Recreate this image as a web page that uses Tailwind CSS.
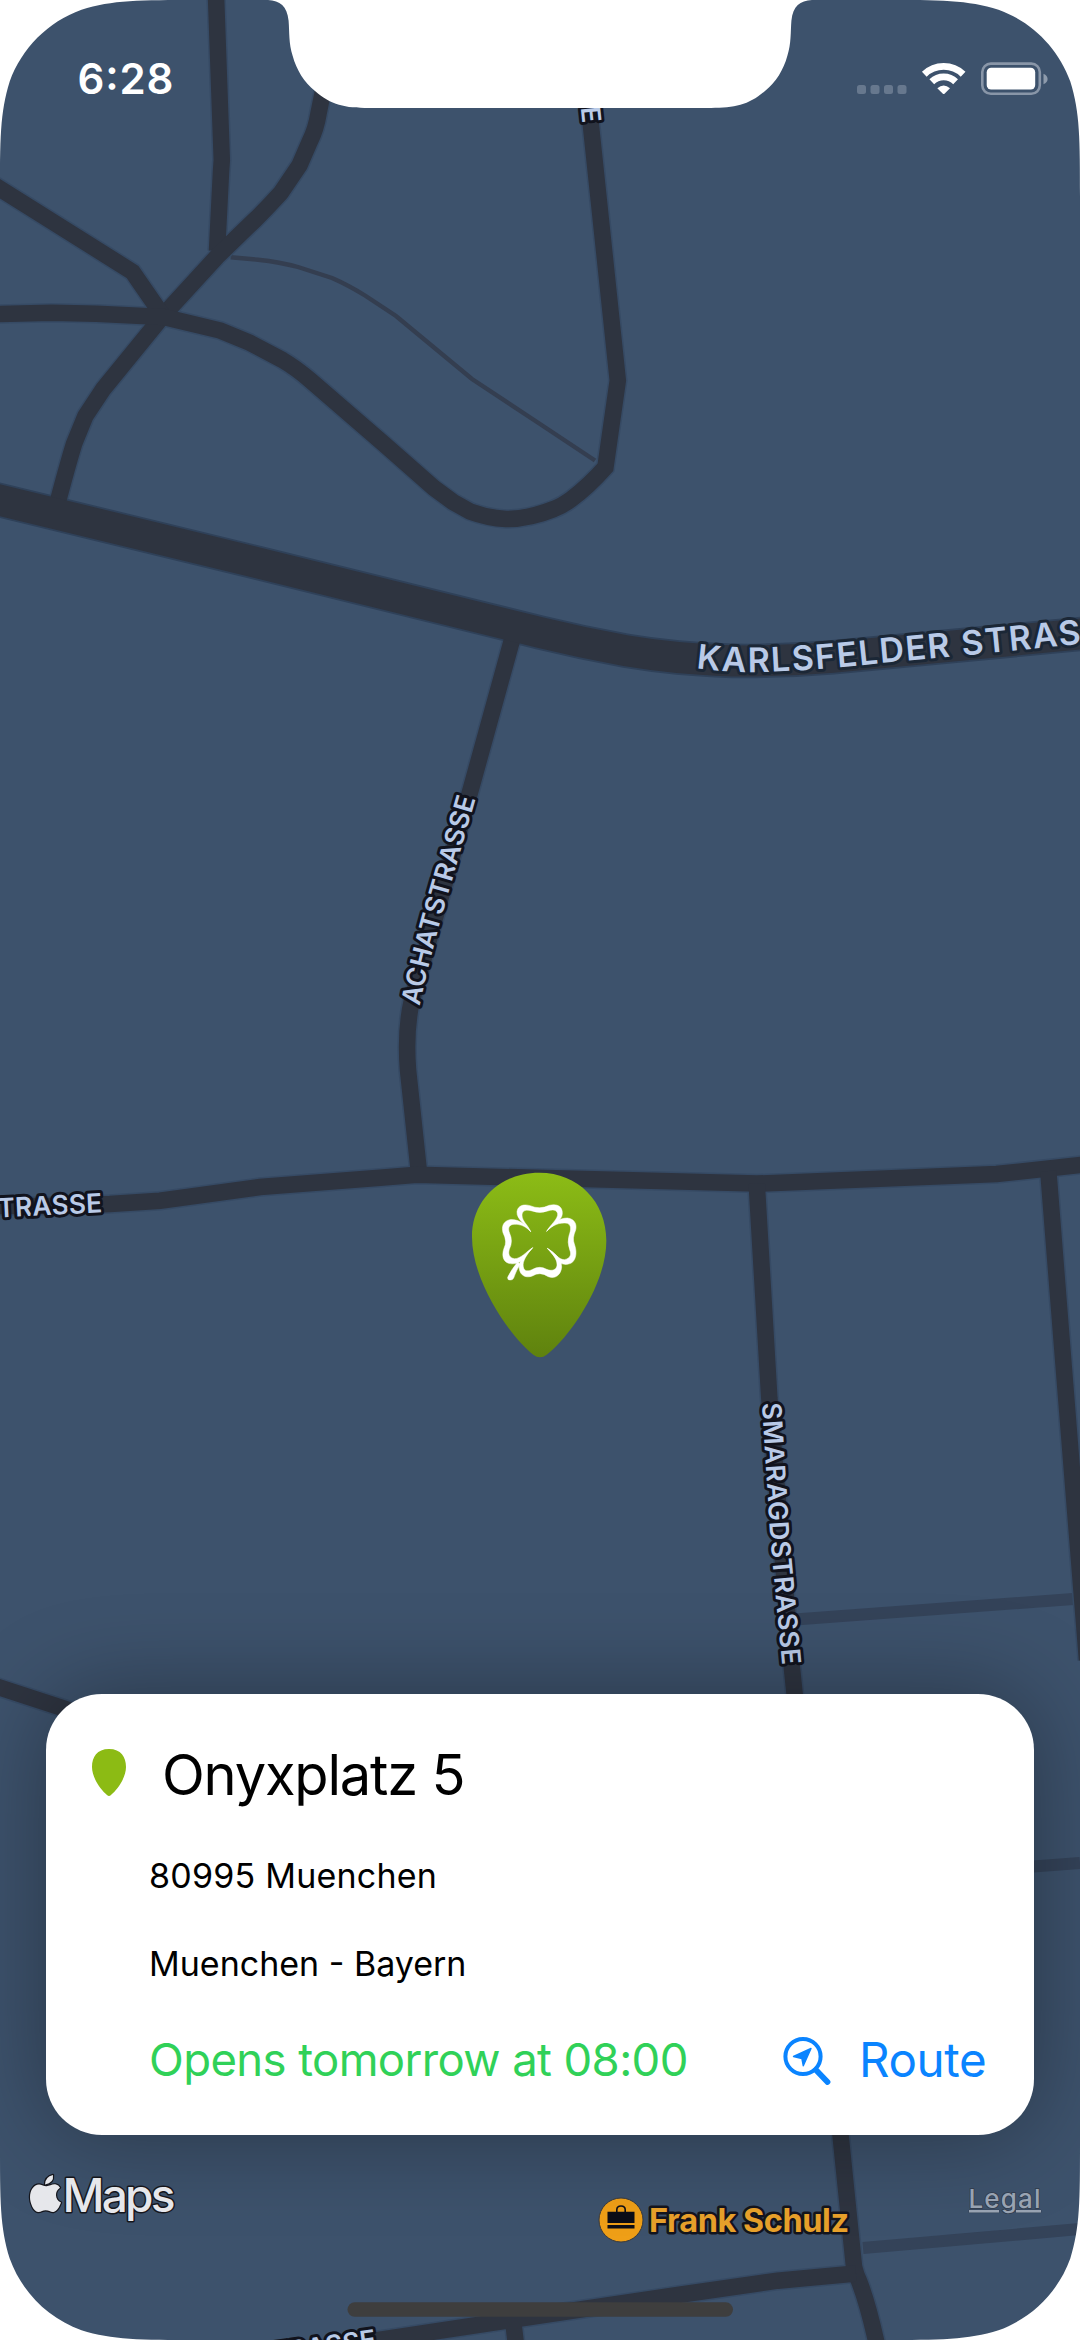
<!DOCTYPE html>
<html lang="en">
<head>
<meta charset="utf-8">
<title>Store location</title>
<script src="https://cdn.jsdelivr.net/npm/@tailwindcss/browser@4"></script>
</head>
<body class="bg-white">
<main class="relative flex h-[2340px] w-[1080px] flex-col overflow-hidden bg-[#3d526c] font-['Inter',sans-serif]">

  <!-- Map canvas -->
  <svg class="absolute inset-0" width="1080" height="2340" viewBox="0 0 1080 2340" fill="none">
    <defs>
      <linearGradient id="pin" x1="0" y1="0" x2="0" y2="1"><stop stop-color="#8cbc16"/><stop offset="1" stop-color="#5f820e"/></linearGradient>
      <g id="roads">
        <path d="M216 -4L221.8 160L221 172L217 251"/>
        <path d="M325 70L322.7 93L318.5 113.6Q316 129 310 141L299.6 165L280.7 193Q268 207 254.8 220L217 256.6L163.6 315L103.3 389L85.4 416L74 444Q67 467 57 505"/>
        <path d="M-5 185.500L132.600 272L163.600 317"/>
        <path d="M-5 314L51.700 312.700L96.400 313.700L163.600 317L220.400 330.600L249.700 342.700L282.400 360Q296 368 310 380L384 444L434 488L453 502L470 511.400Q488 518 506 519Q529 519 553.800 509Q562 506 571 499.400Q589 486 605.400 467.300L617.800 380.500L584 60"/>
        <path d="M512 640L469.400 794.300L412 1000Q405 1030 408 1070L418.700 1170"/>
        <path d="M-5 1206L60 1206L110 1204L160 1200.700L260 1187L380 1177.700L416.700 1174.700L756.700 1183.600L996.700 1174L1085 1164.500"/>
        <path d="M756.700 1183.600L769.300 1398L791.700 1666L840.600 2136L854 2266.700Q856 2275 859 2281Q868 2304 877 2345"/>
        <path d="M856 2273.500L777.600 2280.700L677.800 2295L540 2315.500L378.800 2340L300 2352M513 2320L516 2345"/>
        <path d="M1048.300 1171L1062 1345L1087 1660"/>
        <path d="M-5 1686L65.400 1709L130 1735"/>
      </g>
      <path id="mainroad" d="M-5 499L258.300 563L540 632.500Q583 643 626 650.700Q652 655 677.800 657.500Q735 662.500 769 660.500Q800 660 832.700 657.300L1085 633.500"/>
    </defs>

    <path d="M795 1619.500L1073 1599M1020 1867.500L1080 1863M863 2248L1080 2229" stroke="#344359" stroke-width="12"/>
    <path d="M230.700 257.300L258 259.700Q280 262 298 267L332 278Q348 285 365 295.500L396 316L472 379L540 424L595 460.500" stroke="#343e50" stroke-width="4.400"/>

    <use href="#roads" stroke="#364a64" stroke-width="19.500"/>
    <use href="#mainroad" stroke="#2f4159" stroke-width="34.500"/>
    <use href="#roads" stroke="#2e3440" stroke-width="16.500"/>
    <use href="#mainroad" stroke="#2e3440" stroke-width="31"/>

    <!-- Street labels -->
    <path id="l1" d="M696 668.200Q735 673.500 774 671.700Q830 669 884.400 662.700L972 654.700L1180 634"/>
    <path id="l2" d="M419.500 1006Q428 966 441 919L476 797L481 777"/>
    <path id="l3" d="M762 1403L770 1533.600L782 1664L784 1700"/>
    <g font-family="Inter" font-weight="600" fill="#b9cae7" stroke-linejoin="round" paint-order="stroke">
      <text font-size="34" stroke="#1b2736" stroke-width="6" textLength="433"><textPath href="#l1" textLength="433">KARLSFELDER STRASSE</textPath></text>
      <g font-size="26.500" stroke="#11131d" stroke-width="6">
        <text textLength="215"><textPath href="#l2" textLength="215">ACHATSTRASSE</textPath></text>
        <text textLength="263"><textPath href="#l3" textLength="263">SMARAGDSTRASSE</textPath></text>
        <text transform="translate(102.500 1212.300) rotate(-2.800)" text-anchor="end" textLength="122">STRASSE</text>
        <text transform="translate(582.500 123.500) rotate(84)" text-anchor="end" textLength="122">STRASSE</text>
        <text transform="translate(377 2348) rotate(-8)" text-anchor="end" textLength="122">STRASSE</text>
      </g>
    </g>

    <!-- Point of interest -->
    <circle cx="621" cy="2220" r="22" fill="#ef9f17" stroke="#3a3a3c" stroke-width="1"/>
    <path d="M607.500 2211.700h27v11.300h-27zM607.500 2225h27v3.600h-27z" fill="#0d0e17"/>
    <path d="M616.800 2212v-2.200q0-3.800 4.200-3.800t4.200 3.800v2.200" stroke="#0d0e17" stroke-width="1.600"/>
    <text x="649" y="2231.700" font-family="Inter" font-size="32.500" font-weight="700" fill="#e8a12b" stroke="#14151e" stroke-width="5" stroke-linejoin="round" paint-order="stroke" textLength="200">Frank Schulz</text>

    <!-- Location marker -->
    <g transform="translate(380 1120) scale(.33333)">
      <path d="M478 158C595 158 679 245 679 362C679 500 560 660 500 704Q480 719 460 704C396 655 276 490 276 350C276 240 361 158 478 158Z" fill="url(#pin)"/>
    </g>
    <g transform="translate(495 1195) scale(.33333)" fill="#fff" stroke="#fff" stroke-width="1.500">
      <path d="M107 110C94 88 64 74 66 50C69 30 88 27 105 32Q135 45 163 31C186 25 203 34 202 56C201 78 173 88 155 109C165 90 190 72 188 56C184 42 171 44 158 48Q135 57 111 48C95 43 82 45 81 60C81 79 98 88 107 110Z"/>
      <path d="M155 109C172 88 190 69 217 69C240 72 246 89 242 105Q231 130 238 147C245 166 246 188 232 202C218 212 199 209 187 199C180 186 169 172 157 160C180 173 190 194 208 194C227 190 230 178 224 164Q216 141 222 122C229 103 229 90 217 85C193 81 172 91 155 109Z"/>
      <path d="M157 160C176 173 200 191 200 216C198 241 179 253 160 245Q135 228 112 243C93 250 76 242 73 222C68 195 95 174 113 158C97 177 81 198 85 216C88 230 100 230 113 223Q134 211 155 223C171 230 185 224 186 211C187 192 173 178 157 160Z"/>
      <path d="M107 110C94 90 74 72 45 74C25 78 19 95 24 113Q38 139 27 160C20 179 23 199 41 205C57 209 70 204 79 198C89 184 101 172 113 158C94 170 77 192 58 191C42 188 39 177 43 163Q55 139 44 115C37 98 43 89 57 88C78 87 93 95 107 110Z"/>
      <path d="M68 201Q48 225 38 247Q37 256 45 255Q53 256 56 249Q64 225 76 208Z"/>
    </g>
  </svg>

  <!-- Address card -->
  <section class="relative mx-[46px] mt-[1694px] flex h-[441px] flex-col rounded-[56px] bg-white px-[46px] pt-[41px] text-[34px] leading-[40px] whitespace-nowrap text-black shadow-[0_0_92px_rgba(0,0,0,0.34)]">
    <header class="flex h-20 items-center">
      <svg class="-mt-[5px] shrink-0" width="34" height="47" viewBox="0 0 34 47"><path d="M17 0C29 0 34 8 34 18C34 29 25 41 19 46Q17 48 15 46C9 41 0 29 0 18C0 8 5 0 17 0Z" fill="#8cbb14"/></svg>
      <h1 class="ml-9 text-[56px] leading-[80px] tracking-[-1.2px]">Onyxplatz 5</h1>
    </header>
    <p class="mt-[41px] ml-[57px] tracking-[0.22px]">80995 Muenchen</p>
    <p class="mt-[48px] ml-[57px] tracking-[0px]">Muenchen - Bayern</p>
    <div class="mt-[48px] ml-[57px] flex h-14 items-center leading-[56px]">
      <p class="text-[45.5px] tracking-[-0.62px] text-[#30d158]">Opens tomorrow at 08:00</p>
      <a class="ml-auto flex w-[205px] shrink-0 items-center gap-7 text-[#0a84ff]">
        <svg width="48" height="50" viewBox="0 0 48 50" fill="none" stroke="currentColor">
          <circle cx="20" cy="21.500" r="17.600" stroke-width="4"/>
          <path d="M33 35L44.500 47" stroke-width="5.800" stroke-linecap="round"/>
          <path d="M10.500 21.500L28 13.500L20.300 30.800L18.900 23.500Z" fill="currentColor" stroke-width="1.400" stroke-linejoin="round"/>
        </svg>
        <span class="text-[47.5px] tracking-[-0.4px]">Route</span>
      </a>
    </div>
  </section>

  <!-- Status bar, attribution and screen edge -->
  <svg class="absolute inset-0" width="1080" height="2340" viewBox="0 0 1080 2340" fill="none" font-family="Inter">
    <text x="77.500" y="94" font-size="42" font-weight="600" fill="#fff" textLength="96">6:28</text>
    <g fill="#67788e"><rect x="857" y="85" width="9" height="9" rx="2.500"/><rect x="870.500" y="85" width="9" height="9" rx="2.500"/><rect x="884" y="85" width="9" height="9" rx="2.500"/><rect x="897.500" y="85" width="9" height="9" rx="2.500"/></g>
    <g stroke="#fff" stroke-width="6.800">
      <path d="M924.300 74.200A28 28 0 0 1 963.100 74.200"/>
      <path d="M931.800 81.800A17 17 0 0 1 955.600 81.800"/>
    </g>
    <path d="M937.300 88.300Q943.700 82.500 950 88.300L944.500 93.700Q943.700 94.300 942.900 93.700Z" fill="#fff"/>
    <rect x="982.300" y="63.600" width="57.500" height="30.200" rx="8.500" stroke="#8996a8" stroke-width="2.600"/>
    <rect x="986.700" y="67.800" width="48.500" height="21.800" rx="4.500" fill="#fff"/>
    <path d="M1043.500 73.700Q1047.600 75.500 1047.600 79T1043.500 84.300Z" fill="#8e9bac"/>

    <g fill="#e6e7eb" stroke="#15161c" stroke-width="2.400" stroke-linejoin="round" paint-order="stroke">
      <path d="M45 2186C49 2187 52 2183.500 56 2184.500Q58.500 2185 60 2187.700C54.500 2191 54.500 2199.500 61 2202.500C59.500 2206.500 57 2211.500 53.500 2212C50.500 2212.300 49 2210.300 45.700 2210.300C42.500 2210.300 41 2212.300 38 2212C33.500 2211.500 30 2203 30 2197.500C30 2190 34 2184.500 39 2184.500C41.500 2184.500 43 2185.700 45 2186Z"/>
      <path d="M45 2184.500Q45 2177 53 2175Q54 2183 45 2184.500Z"/>
      <text x="62.500" y="2212" font-size="46" font-weight="500" stroke-width="3" textLength="113">Maps</text>
    </g>
    <g fill="#98a3b2" stroke="#303a4a" stroke-width="1.500" paint-order="stroke">
      <text x="968.500" y="2207.700" font-size="26" font-weight="500" textLength="72">Legal</text>
      <path stroke-width=".6" d="M969 2210h30v2.600h-30zM1016 2210h25v2.600h-25z"/>
    </g>
    <rect x="347.500" y="2302.300" width="385.500" height="14.500" rx="7.250" fill="#3e3e3e"/>

    <g fill="#fff">
      <path id="corner" d="M-2 -2H197V0C140.400 0 112 0 81.500 9.700C48 21.800 21.800 48 9.700 81.500C0 112 0 140.400 0 197H-2Z"/>
      <use href="#corner" transform="translate(1080 0) scale(-1 1)"/>
      <use href="#corner" transform="translate(0 2340) scale(1 -1)"/>
      <use href="#corner" transform="translate(1080 2340) scale(-1 -1)"/>
      <path d="M268 0C280 .5 287 6 288.600 20.700C289.500 32 288.600 43 292.700 56C296.500 70 304 82 315 91C331 105 345 108 369 108H711C735 108 749 105 765 91C776 82 783.500 70 787.300 56C791.400 43 790.500 32 791.400 20.700C793 6 800 .5 812 0V-2H268Z"/>
    </g>
  </svg>
</main>
</body>
</html>
